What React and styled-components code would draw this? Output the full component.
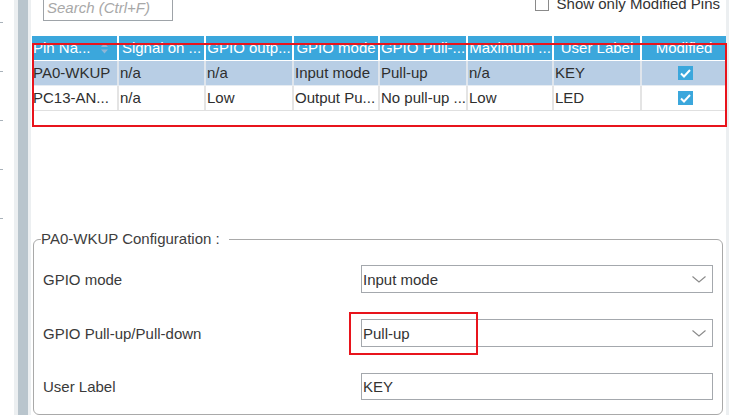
import React from "react";
import styled, { createGlobalStyle } from "styled-components";

const GlobalStyle = createGlobalStyle`
  html, body {
    margin: 0;
    padding: 0;
    width: 729px;
    height: 415px;
    overflow: hidden;
    background: #ffffff;
    font-family: "Liberation Sans", Arial, sans-serif;
    font-size: 15px;
    color: #333333;
  }
`;

const Screen = styled.div`
  display: flex;
  width: 729px;
  height: 415px;
  overflow: hidden;
`;

const Ruler = styled.div`
  width: 14px;
  display: flex;
  flex-direction: column;
  gap: 48px;
  padding-top: 22px;
  box-sizing: border-box;
`;

const Tick = styled.div`
  width: 3px;
  height: 1px;
  background: #a9b2ba;
`;

const Splitter = styled.div`
  width: 17px;
  box-sizing: border-box;
  border-left: 4px solid #eceff1;
  border-right: 3px solid #eceff1;
  background: #b9c5cd;
`;

const Main = styled.div`
  flex: 1;
  display: flex;
  flex-direction: column;
  position: relative;
  min-width: 0;
`;

const RightEdge = styled.div`
  width: 3px;
  background: #eceff1;
`;

const TopBar = styled.div`
  height: 36px;
  display: flex;
  justify-content: space-between;
  align-items: flex-start;
  padding: 0 6px 0 12px;
`;

const SearchBox = styled.div`
  margin-top: -8px;
  width: 125px;
  height: 25px;
  border: 1px solid #9ea3a8;
  display: flex;
  align-items: center;
  padding-left: 3px;
  padding-top: 2px;
  box-sizing: content-box;
  font-style: italic;
  color: #a8a8a8;
  font-size: 15px;
`;

const CheckOption = styled.label`
  display: flex;
  align-items: center;
  gap: 8px;
  margin-top: -4px;
  color: #333;
  font-size: 15px;
  line-height: 16px;
`;

const EmptyBox = styled.span`
  width: 12px;
  height: 12px;
  border: 1px solid #8a8a8a;
  background: #fff;
`;

const Table = styled.div`
  margin-left: 1px;
  width: 694px;
  display: flex;
  flex-direction: column;
`;

const COLS = "85px 85px 86px 84px 86px 84px 86px 84px";

const Row = styled.div`
  display: grid;
  grid-template-columns: ${COLS};
  column-gap: 2px;
  height: 24px;
  background: ${(p) => p.$gap};
  border-bottom: 1px solid ${(p) => p.$line};
`;

const HeadCell = styled.div`
  background: #3ba7dc;
  color: #ffffff;
  line-height: 24px;
  white-space: nowrap;
  overflow: hidden;
  text-align: center;
  display: flex;
  justify-content: ${(p) => (p.$sort ? "space-between" : "center")};
  align-items: center;
  padding: ${(p) => (p.$sort ? "0 9px 0 1px" : "0")};
`;

const Cell = styled.div`
  background: ${(p) => p.$bg};
  line-height: 24px;
  padding-left: 1px;
  white-space: nowrap;
  overflow: hidden;
  color: #2e2e2e;
  display: flex;
  align-items: center;
  justify-content: ${(p) => (p.$center ? "center" : "flex-start")};
`;

const Checked = styled.span`
  width: 15px;
  height: 14px;
  background: #3ba7dc;
  display: flex;
  align-items: center;
  justify-content: center;
  margin-left: 1px;
`;

const Highlight = styled.div`
  position: absolute;
  border: 2px solid #e8141c;
  pointer-events: none;
`;

const Config = styled.fieldset`
  margin: 119px 3px 0 2px;
  border: 1px solid #a9a9a9;
  border-radius: 6px;
  padding: 17px 9px 14px 9px;
  display: grid;
  grid-template-columns: 318px 1fr;
  row-gap: 26px;
  align-items: center;
  min-width: 0;
`;

const Legend = styled.legend`
  padding: 0 9px 0 0;
  margin-left: -2px;
  line-height: 18px;
  color: #3d3d3d;
  font-size: 15px;
`;

const Label = styled.div`
  color: #3a3a3a;
  font-size: 15px;
`;

const Field = styled.div`
  height: ${(p) => (p.$short ? "25px" : "26px")};
  border: 1px solid #a4a8ad;
  display: flex;
  align-items: center;
  justify-content: space-between;
  padding: 0 6px 0 1px;
  color: #333;
  font-size: 15px;
`;

const SortIcon = () => (
  <svg width="7" height="11" viewBox="0 0 7 11">
    <path d="M3.5 0 L7 4 L0 4 Z" fill="#8fb6d6" />
    <path d="M0 6.5 L7 6.5 L3.5 10.5 Z" fill="#8fb6d6" />
  </svg>
);

const Chevron = () => (
  <svg width="14" height="7" viewBox="0 0 14 7">
    <path d="M0.5 0.5 L7 6 L13.5 0.5" fill="none" stroke="#8a8a8a" strokeWidth="1.1" />
  </svg>
);

const Tick2 = () => (
  <svg width="11" height="9" viewBox="0 0 11 9">
    <path d="M1 4.5 L4 7.5 L10 1" fill="none" stroke="#fff" strokeWidth="2" />
  </svg>
);

const headers = [
  "Pin Na...",
  "Signal on ...",
  "GPIO outp...",
  "GPIO mode",
  "GPIO Pull-...",
  "Maximum ...",
  "User Label",
  "Modified",
];

const rows = [
  { cells: ["PA0-WKUP", "n/a", "n/a", "Input mode", "Pull-up", "n/a", "KEY"], bg: "#b8cee5", gap: "#dfe5ec", line: "#e6ecf2" },
  { cells: ["PC13-AN...", "n/a", "Low", "Output Pu...", "No pull-up ...", "Low", "LED"], bg: "#ffffff", gap: "#e4e4e4", line: "#e0e0e0" },
];

const fields = [
  { label: "GPIO mode", value: "Input mode", select: true },
  { label: "GPIO Pull-up/Pull-down", value: "Pull-up", select: true },
  { label: "User Label", value: "KEY", select: false },
];

export default function App() {
  return (
    <Screen>
      <GlobalStyle />
      <Ruler>
        {[0, 1, 2, 3, 4].map((i) => (
          <Tick key={i} />
        ))}
      </Ruler>
      <Splitter />
      <Main>
        <TopBar>
          <SearchBox>Search (Ctrl+F)</SearchBox>
          <CheckOption>
            <EmptyBox />
            Show only Modified Pins
          </CheckOption>
        </TopBar>
        <Table>
          <Row $gap="#ffffff" $line="#ffffff">
            {headers.map((h, i) => (
              <HeadCell key={h} $sort={i === 0}>
                {h}
                {i === 0 && <SortIcon />}
              </HeadCell>
            ))}
          </Row>
          {rows.map((r) => (
            <Row key={r.cells[0]} $gap={r.gap} $line={r.line}>
              {r.cells.map((c, i) => (
                <Cell key={i} $bg={r.bg}>
                  {c}
                </Cell>
              ))}
              <Cell $bg={r.bg} $center>
                <Checked>
                  <Tick2 />
                </Checked>
              </Cell>
            </Row>
          ))}
        </Table>
        <Config>
          <Legend>PA0-WKUP Configuration :</Legend>
          {fields.map((f) => (
            <React.Fragment key={f.label}>
              <Label>{f.label}</Label>
              <Field $short={!f.select}>
                {f.value}
                {f.select && <Chevron />}
              </Field>
            </React.Fragment>
          ))}
        </Config>
        <Highlight style={{ left: 1, top: 43, width: 691, height: 80 }} />
        <Highlight style={{ left: 318, top: 312, width: 125, height: 39 }} />
      </Main>
      <RightEdge />
    </Screen>
  );
}
